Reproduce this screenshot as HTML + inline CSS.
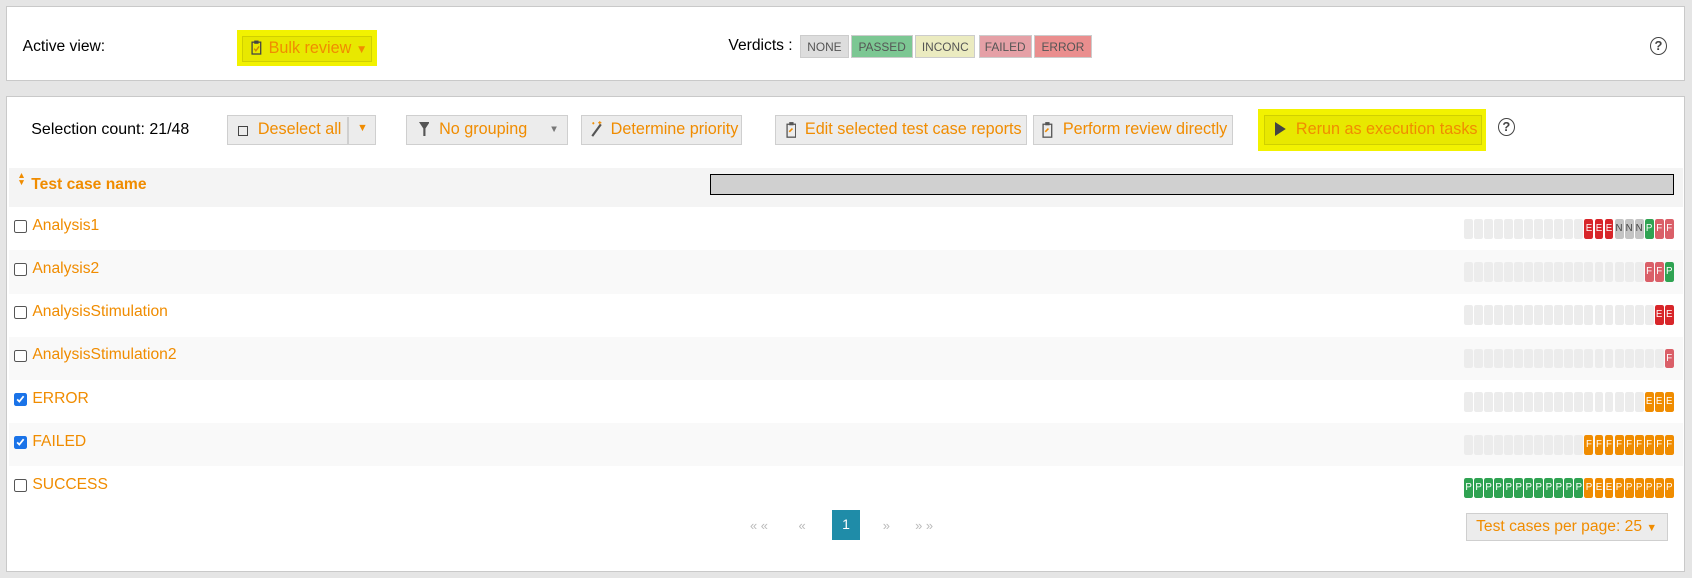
<!DOCTYPE html>
<html><head><meta charset="utf-8"><style>
html{zoom:1.0791}
body{margin:0;width:1568px;height:536px;background:#e5e5e5;font-family:"Liberation Sans",Arial,sans-serif;font-size:14px;position:relative;overflow:hidden}
.p{position:absolute;background:#fff;border:1px solid #c9c9c9}
.a{position:absolute}
.o{color:#f08c00}
.btn{position:absolute;background:#ececec;border:1px solid #cfcfcf;color:#f08c00;font-size:15px;box-sizing:border-box;height:27px;line-height:25px;padding-left:8px;white-space:nowrap}
.v{position:absolute;top:32px;height:22px;line-height:22px;font-size:11px;color:#555;text-align:center;border:1px solid #ccc;box-sizing:border-box}
.row{position:absolute;left:8px;width:1552px;height:40px}
.row .n{position:absolute;left:22px;top:9px;color:#f08c00;font-size:14.5px}
.cb{position:absolute;left:5px;top:12px;width:10px;height:10px;border:1px solid #555;border-radius:2px;background:#fff}
.cb.on{background:#1a73e8;border-color:#1a73e8}
.ch{position:absolute;right:9px;top:11px;display:flex;gap:1px}
.ch i{display:block;width:8.3px;height:18.5px;border-radius:2px;background:#ececec;font-style:normal;color:#fff;font-size:9px;line-height:19px;text-align:center}
.ch .E{background:#d8262a}.ch .N{background:#c4c4c4;color:#444}.ch .P{background:#2fa352}.ch .F{background:#da5f68}.ch .O{background:#f08c00}
.help{position:absolute;width:14px;height:15px;border:1.5px solid #444;border-radius:50%;font-size:12px;font-weight:bold;line-height:15px;text-align:center;color:#444}
</style></head><body>
<div class="p" style="left:6px;top:6px;width:1554px;height:67px"></div>
<div class="a" style="left:21px;top:35px;font-size:14.5px">Active view:</div>
<div class="a" style="left:220px;top:28px;width:129px;height:33px;background:#f2f200"></div>
<div class="btn" style="left:224px;top:33px;width:121px;height:24px;line-height:22px;background:#e8e800;border-color:#d0d000;padding-left:24px">Bulk review <span style="font-size:11px">▼</span></div>
<svg class="a" style="left:233px;top:37px" width="10" height="14" viewBox="0 0 10 14"><rect x="1" y="2" width="8" height="11" fill="none" stroke="#444" stroke-width="1.2"/><rect x="3" y="0.5" width="4" height="3" fill="#444"/><path d="M3 8l1.5 2 3-4" stroke="#c80" fill="none" stroke-width="1.3"/></svg>
<div class="a" style="left:675px;top:34px;font-size:14.5px">Verdicts :</div>
<div class="v" style="left:741px;width:46px;background:#ddd">NONE</div>
<div class="v" style="left:789px;width:57px;background:#7cc793">PASSED</div>
<div class="v" style="left:848px;width:56px;background:#ebebc0">INCONC</div>
<div class="v" style="left:907px;width:49px;background:#e5a0a6">FAILED</div>
<div class="v" style="left:958px;width:54px;background:#ea8e8e">ERROR</div>
<div class="help" style="left:1529px;top:34px">?</div>

<div class="p" style="left:6px;top:89px;width:1554px;height:439px"></div>
<div class="a" style="left:29px;top:112px;font-size:14.8px">Selection count: 21/48</div>
<div class="btn" style="left:210px;top:107px;width:138px;padding-left:28px">Deselect all</div>
<div class="a" style="left:221px;top:117px;width:7px;height:7px;border:1px solid #444"></div>
<div class="a" style="left:322px;top:108px;width:1px;height:25px;background:#cfcfcf"></div>
<div class="a o" style="left:331px;top:113px;font-size:10px">▼</div>
<div class="btn" style="left:376px;top:107px;width:150px;padding-left:30px">No grouping</div>
<svg class="a" style="left:388px;top:113px" width="10" height="14" viewBox="0 0 10 14"><path d="M0 0h10L6 6v7H4V6z" fill="#555"/></svg>
<div class="a" style="left:509px;top:115px;font-size:9px;color:#777">▼</div>
<div class="btn" style="left:538px;top:107px;width:150px;padding-left:27px">Determine priority</div>
<svg class="a" style="left:546px;top:111px" width="14" height="16" viewBox="0 0 14 16"><path d="M3 15L11 4" stroke="#555" stroke-width="2"/><path d="M10 1v3M8.5 2.5h3M4 2v2M3 3h2" stroke="#f08c00"/></svg>
<div class="btn" style="left:718px;top:107px;width:234px;padding-left:27px">Edit selected test case reports</div>
<svg class="a" style="left:728px;top:112px" width="10" height="16" viewBox="0 0 10 16"><rect x="1" y="3" width="8" height="12" fill="none" stroke="#555" stroke-width="1.2"/><rect x="3" y="1" width="4" height="3" fill="#555"/><path d="M3 10l3-3" stroke="#f08c00" stroke-width="1.5"/></svg>
<div class="btn" style="left:957px;top:107px;width:186px;padding-left:27px">Perform review directly</div>
<svg class="a" style="left:966px;top:112px" width="10" height="16" viewBox="0 0 10 16"><rect x="1" y="3" width="8" height="12" fill="none" stroke="#555" stroke-width="1.2"/><rect x="3" y="1" width="4" height="3" fill="#555"/><path d="M3 10l3-3" stroke="#f08c00" stroke-width="1.5"/></svg>
<div class="a" style="left:1166px;top:101px;width:211px;height:39px;background:#f2f200"></div>
<div class="btn" style="left:1171px;top:107px;width:202px;background:#e8e800;border-color:#d0d000;padding-left:29px">Rerun as execution tasks</div>
<svg class="a" style="left:1182px;top:113px" width="10" height="13" viewBox="0 0 10 13"><path d="M0 0l10 6.5L0 13z" fill="#444"/></svg>
<div class="help" style="left:1388px;top:109px">?</div>

<div class="a" style="left:8px;top:156px;width:1552px;height:36px;background:#f4f4f4"></div>
<div class="a o" style="left:16px;top:159px;font-size:8px;line-height:7px">▲<br>▼</div>
<div class="a o" style="left:29px;top:163px;font-weight:bold;font-size:14.5px">Test case name</div>
<div class="a" style="left:658px;top:161px;width:891px;height:18px;background:#d0d0d0;border:1px solid #000"></div>

<div class="row" style="top:192px;background:#fff"><div class="cb"></div><div class="n">Analysis1</div><div class="ch"><i></i><i></i><i></i><i></i><i></i><i></i><i></i><i></i><i></i><i></i><i></i><i></i><i class="E">E</i><i class="E">E</i><i class="E">E</i><i class="N">N</i><i class="N">N</i><i class="N">N</i><i class="P">P</i><i class="F">F</i><i class="F">F</i></div></div>
<div class="row" style="top:232px;background:#f9f9f9"><div class="cb"></div><div class="n">Analysis2</div><div class="ch"><i></i><i></i><i></i><i></i><i></i><i></i><i></i><i></i><i></i><i></i><i></i><i></i><i></i><i></i><i></i><i></i><i></i><i></i><i class="F">F</i><i class="F">F</i><i class="P">P</i></div></div>
<div class="row" style="top:272px;background:#fff"><div class="cb"></div><div class="n">AnalysisStimulation</div><div class="ch"><i></i><i></i><i></i><i></i><i></i><i></i><i></i><i></i><i></i><i></i><i></i><i></i><i></i><i></i><i></i><i></i><i></i><i></i><i></i><i class="E">E</i><i class="E">E</i></div></div>
<div class="row" style="top:312px;background:#f9f9f9"><div class="cb"></div><div class="n">AnalysisStimulation2</div><div class="ch"><i></i><i></i><i></i><i></i><i></i><i></i><i></i><i></i><i></i><i></i><i></i><i></i><i></i><i></i><i></i><i></i><i></i><i></i><i></i><i></i><i class="F">F</i></div></div>
<div class="row" style="top:352px;background:#fff"><div class="cb on"><svg width="10" height="10" style="display:block"><path d="M2 5l2 2 4-5" stroke="#fff" stroke-width="1.6" fill="none"/></svg></div><div class="n">ERROR</div><div class="ch"><i></i><i></i><i></i><i></i><i></i><i></i><i></i><i></i><i></i><i></i><i></i><i></i><i></i><i></i><i></i><i></i><i></i><i></i><i class="O">E</i><i class="O">E</i><i class="O">E</i></div></div>
<div class="row" style="top:392px;background:#f9f9f9"><div class="cb on"><svg width="10" height="10" style="display:block"><path d="M2 5l2 2 4-5" stroke="#fff" stroke-width="1.6" fill="none"/></svg></div><div class="n">FAILED</div><div class="ch"><i></i><i></i><i></i><i></i><i></i><i></i><i></i><i></i><i></i><i></i><i></i><i></i><i class="O">F</i><i class="O">F</i><i class="O">F</i><i class="O">F</i><i class="O">F</i><i class="O">F</i><i class="O">F</i><i class="O">F</i><i class="O">F</i></div></div>
<div class="row" style="top:432px;background:#fff"><div class="cb"></div><div class="n">SUCCESS</div><div class="ch"><i class="P">P</i><i class="P">P</i><i class="P">P</i><i class="P">P</i><i class="P">P</i><i class="P">P</i><i class="P">P</i><i class="P">P</i><i class="P">P</i><i class="P">P</i><i class="P">P</i><i class="P">P</i><i class="O">P</i><i class="O">E</i><i class="O">E</i><i class="O">P</i><i class="O">P</i><i class="O">P</i><i class="O">P</i><i class="O">P</i><i class="O">P</i></div></div>

<div class="a" style="left:695px;top:480px;color:#bbb;font-size:12px">« «</div>
<div class="a" style="left:740px;top:480px;color:#bbb;font-size:12px">«</div>
<div class="a" style="left:771px;top:473px;width:26px;height:27px;background:#1f8ca8;color:#fff;text-align:center;line-height:27px;font-size:13px">1</div>
<div class="a" style="left:818px;top:480px;color:#bbb;font-size:12px">»</div>
<div class="a" style="left:848px;top:480px;color:#bbb;font-size:12px">» »</div>
<div class="btn" style="left:1359px;top:475px;width:187px;height:26px;line-height:24px;font-size:14.5px">Test cases per page: 25 <span style="font-size:10px">▼</span></div>
</body></html>
